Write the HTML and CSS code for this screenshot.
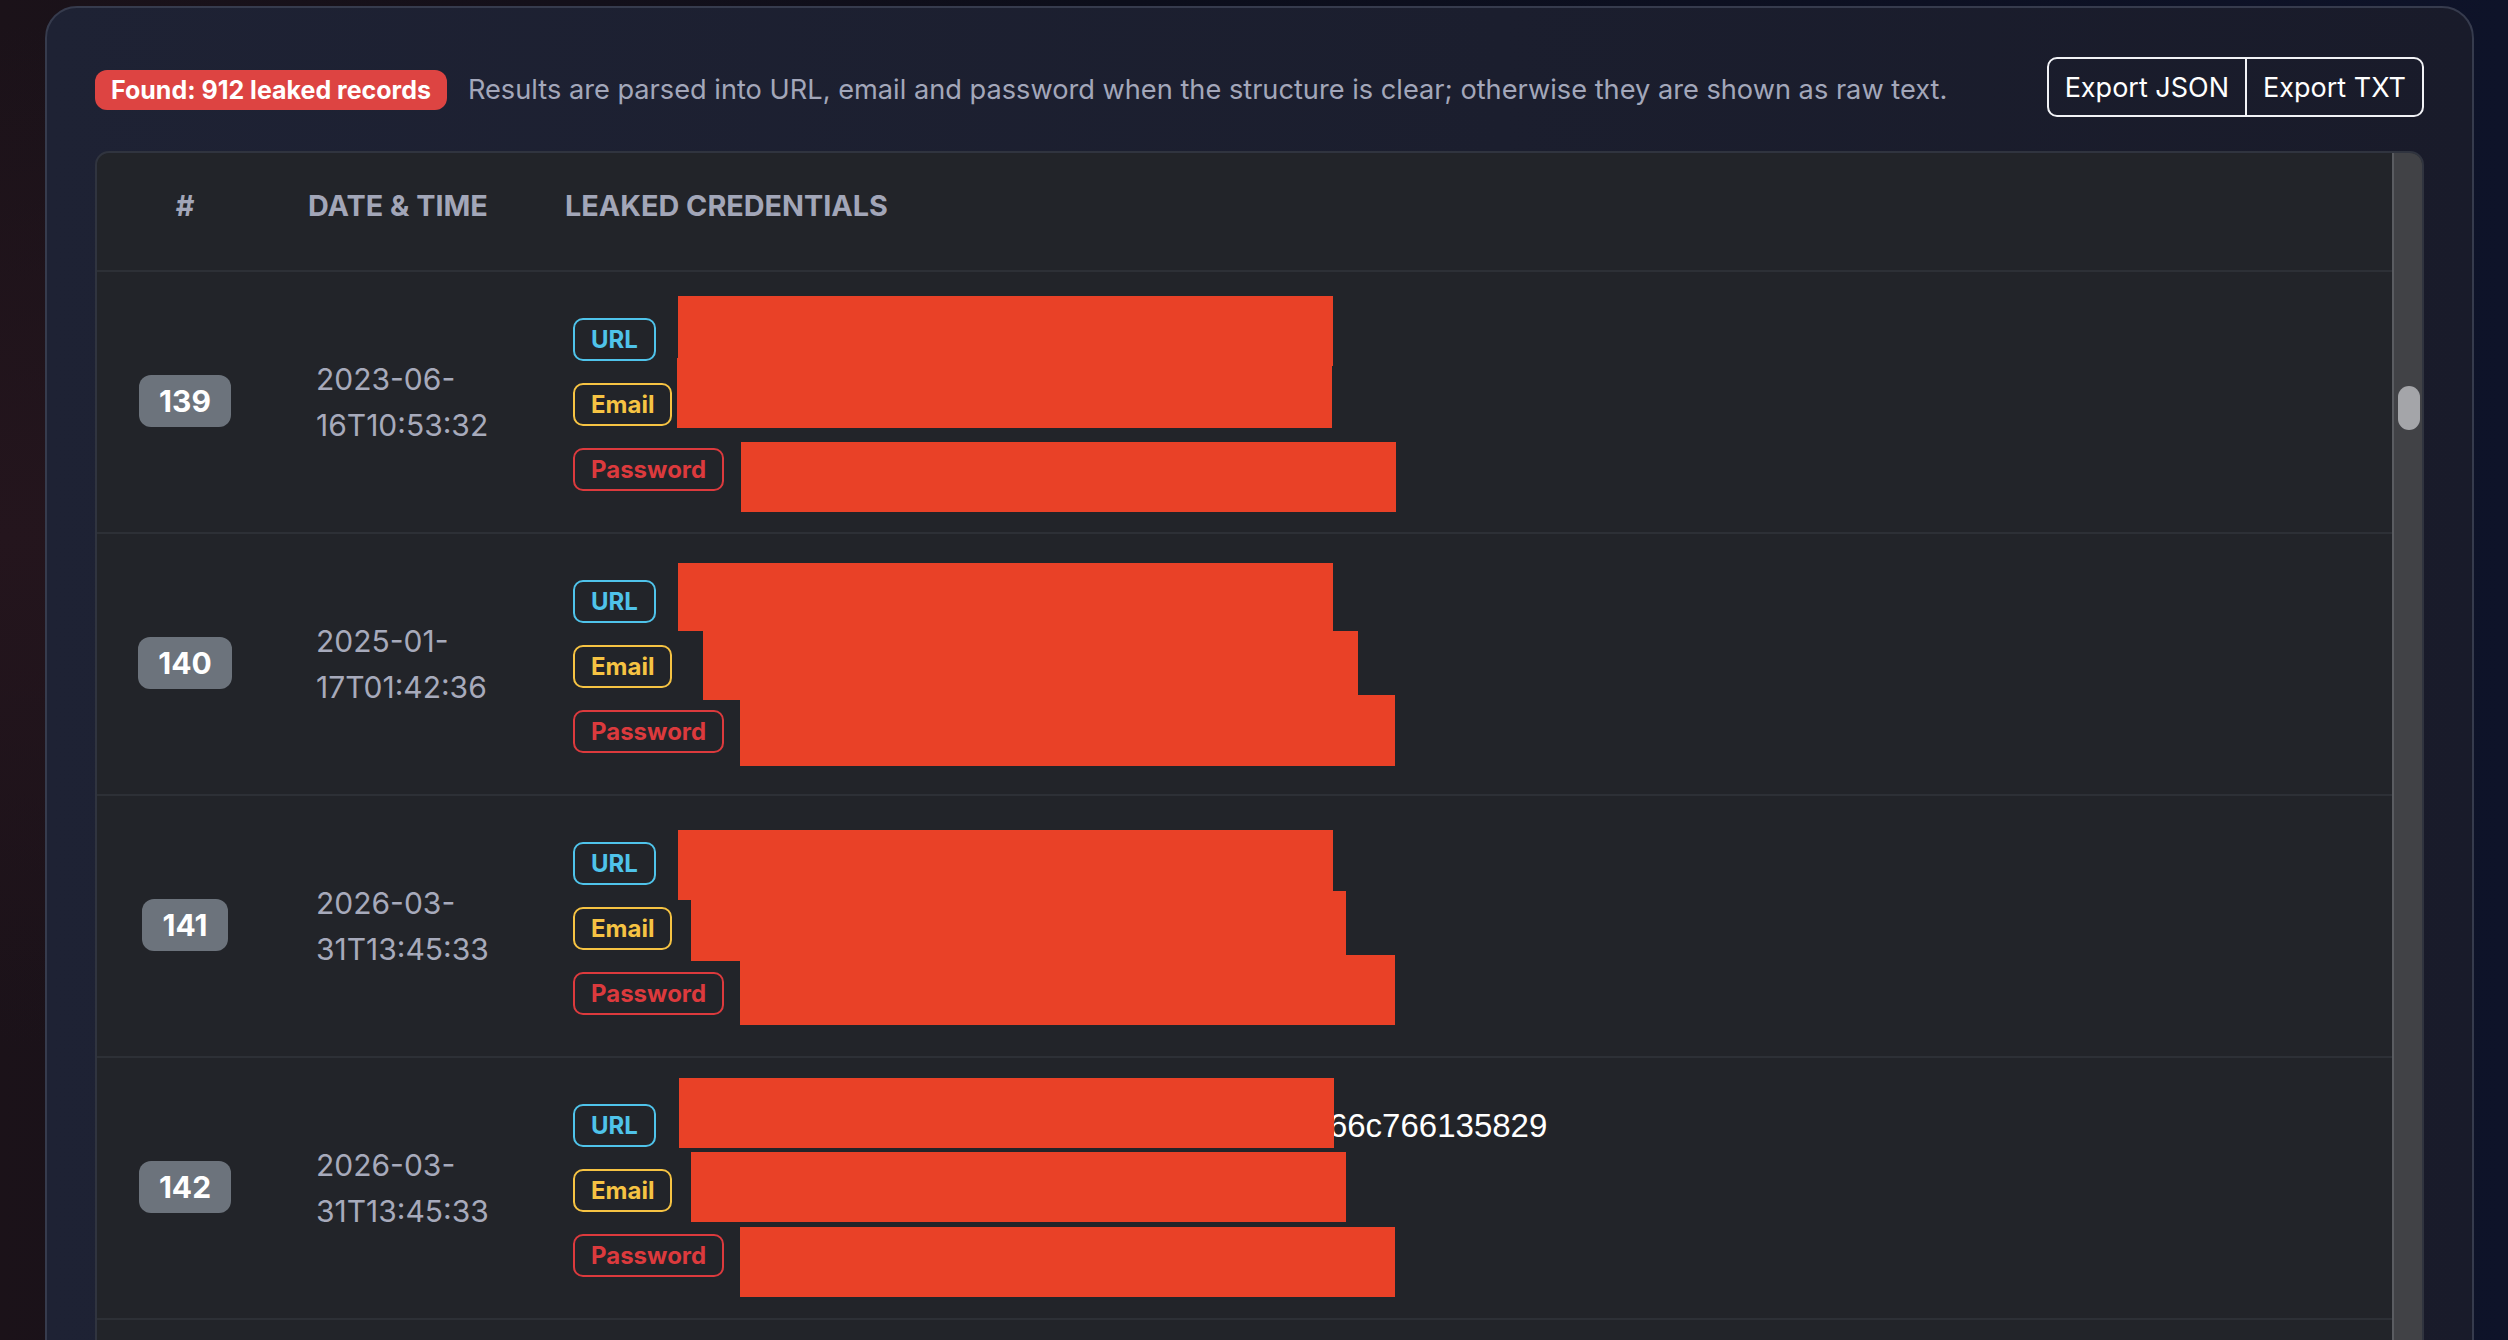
FILE: index.html
```html
<!DOCTYPE html>
<html lang="en">

<head>
    <meta charset="UTF-8">
    <meta name="viewport" content="width=device-width, initial-scale=1.0">
    <title>Leak lookup</title>
    <link rel="stylesheet" href="styles.css">
</head>

<body>
    <main class="card">
        <header class="card-head">
            <div class="summary">
                <span class="badge badge-found">Found: 912 leaked records</span>
                <span class="hint">Results are parsed into URL, email and password when the structure is clear; otherwise they are shown as raw text.</span>
            </div>
            <div class="btn-group">
                <button class="btn">Export JSON</button>
                <button class="btn">Export TXT</button>
            </div>
        </header>

        <section class="results">
            <div class="results-body">
                <table class="leaks">
                    <colgroup>
                        <col class="c-num">
                        <col class="c-date">
                        <col>
                    </colgroup>
                    <thead>
                        <tr>
                            <th class="col-num">#</th>
                            <th>Date &amp; Time</th>
                            <th>Leaked credentials</th>
                        </tr>
                    </thead>
                    <tbody>
                        <tr class="mask-1">
                            <td class="col-num"><span class="badge badge-num">139</span></td>
                            <td class="col-date">2023-06-16T10:53:32</td>
                            <td>
                                <div class="creds">
                                    <div class="cred"><span class="tag tag-url">URL</span></div>
                                    <div class="cred"><span class="tag tag-email">Email</span></div>
                                    <div class="cred"><span class="tag tag-pass">Password</span></div>
                                    <mark class="redacted r-url"></mark>
                                    <mark class="redacted r-email"></mark>
                                    <mark class="redacted r-pass"></mark>
                                </div>
                            </td>
                        </tr>
                        <tr class="mask-2">
                            <td class="col-num"><span class="badge badge-num">140</span></td>
                            <td class="col-date">2025-01-17T01:42:36</td>
                            <td>
                                <div class="creds">
                                    <div class="cred"><span class="tag tag-url">URL</span></div>
                                    <div class="cred"><span class="tag tag-email">Email</span></div>
                                    <div class="cred"><span class="tag tag-pass">Password</span></div>
                                    <mark class="redacted r-url"></mark>
                                    <mark class="redacted r-email"></mark>
                                    <mark class="redacted r-pass"></mark>
                                </div>
                            </td>
                        </tr>
                        <tr class="mask-3">
                            <td class="col-num"><span class="badge badge-num">141</span></td>
                            <td class="col-date">2026-03-31T13:45:33</td>
                            <td>
                                <div class="creds">
                                    <div class="cred"><span class="tag tag-url">URL</span></div>
                                    <div class="cred"><span class="tag tag-email">Email</span></div>
                                    <div class="cred"><span class="tag tag-pass">Password</span></div>
                                    <mark class="redacted r-url"></mark>
                                    <mark class="redacted r-email"></mark>
                                    <mark class="redacted r-pass"></mark>
                                </div>
                            </td>
                        </tr>
                        <tr class="mask-4">
                            <td class="col-num"><span class="badge badge-num">142</span></td>
                            <td class="col-date">2026-03-31T13:45:33</td>
                            <td>
                                <div class="creds">
                                    <div class="cred"><span class="tag tag-url">URL</span><span class="value value-tail">66c766135829</span></div>
                                    <div class="cred"><span class="tag tag-email">Email</span></div>
                                    <div class="cred"><span class="tag tag-pass">Password</span></div>
                                    <mark class="redacted r-url"></mark>
                                    <mark class="redacted r-email"></mark>
                                    <mark class="redacted r-pass"></mark>
                                </div>
                            </td>
                        </tr>
                    </tbody>
                </table>
            </div>
            <div class="scrollbar"><div class="scrollbar-thumb"></div></div>
        </section>
    </main>
</body>

</html>
```

FILE: styles.css
```css
* {
    box-sizing: border-box;
}

html,
body {
    height: 100%;
}

body {
    margin: 0;
    overflow: hidden;
    padding: 6px 34px 0 45px;
    font-family: Inter, "Noto Sans", sans-serif;
    color: #eceef4;
    background:
        radial-gradient(ellipse at 0 40%, #24151d 0, rgba(36, 21, 29, 0) 45%),
        linear-gradient(90deg, #1b1219 0%, #0c0e1b 45%, #0e1329 100%);
}

/* outer panel */
.card {
    height: calc(100vh + 120px);
    border: 2px solid #363b4d;
    border-radius: 32px;
    padding: 49px 48px 0;
    background: linear-gradient(90deg, #1e2234 0%, #1b1e2e 60%, #191b2a 100%);
}

.card-head {
    display: flex;
    justify-content: space-between;
    align-items: center;
    margin-bottom: 34px;
}

.summary {
    display: flex;
    align-items: center;
    gap: 21px;
    padding-top: 5px;
}

.badge {
    display: inline-block;
    font-weight: 700;
    color: #fff;
    white-space: nowrap;
}

.badge-found {
    font-size: 25px;
    line-height: 24px;
    padding: 8px 16px;
    border-radius: 12px;
    background-color: #dd4442;
}

.hint {
    font-size: 27.2px;
    color: #a3a7ba;
    white-space: nowrap;
}

.btn-group {
    display: flex;
    border: 2px solid #f1f2f6;
    border-radius: 10px;
    overflow: hidden;
}

.btn {
    height: 56px;
    padding: 0 16px;
    border: none;
    background: transparent;
    color: #fff;
    font-family: inherit;
    font-size: 27px;
    cursor: pointer;
}

.btn + .btn {
    border-left: 2px solid #f1f2f6;
}

/* results table */
.results {
    display: flex;
    height: 1400px;
    border: 2px solid #30343f;
    border-radius: 14px;
    background-color: #222429;
    overflow: hidden;
}

.results-body {
    flex: 1;
}

.scrollbar {
    width: 30px;
    padding-top: 233px;
    background-color: #414246;
    border-left: 2px solid #5a5c61;
}

.scrollbar-thumb {
    width: 22px;
    height: 44px;
    margin-left: 4px;
    border-radius: 11px;
    background-color: #a4a5a9;
}

.leaks {
    width: 100%;
    border-collapse: collapse;
    table-layout: fixed;
}

.c-num {
    width: 176px;
}

.c-date {
    width: 257px;
}

.leaks th {
    height: 118px;
    padding: 0 35px 12px;
    text-align: left;
    font-size: 28.8px;
    font-weight: 700;
    text-transform: uppercase;
    color: #a2a6b8;
    border-bottom: 2px solid #2d3036;
}

.leaks td {
    padding: 46px 27px 41px 43px;
    vertical-align: middle;
    border-bottom: 2px solid #2d3036;
}

.leaks .col-num {
    padding-left: 0;
    padding-right: 0;
    text-align: center;
}

.leaks td.col-num {
    padding-top: 42px;
    padding-bottom: 45px;
}

.badge-num {
    font-size: 30px;
    line-height: 30px;
    padding: 11px 20px;
    border-radius: 12px;
    background-color: #6c737c;
}

.col-date {
    font-size: 30px;
    line-height: 46px;
    color: #a7aabb;
}

.leaks td.col-date {
    padding-top: 43px;
    padding-bottom: 44px;
}

/* credential lines */
.creds {
    position: relative;
}

.cred {
    display: flex;
    align-items: center;
    height: 43px;
}

.cred + .cred {
    margin-top: 22px;
}

.tag {
    display: inline-flex;
    align-items: center;
    height: 43px;
    padding: 0 16px;
    border: 2px solid currentColor;
    border-radius: 10px;
    font-size: 24px;
    font-weight: 700;
}

.tag-url {
    color: #4fc3ea;
}

.tag-email {
    color: #f6c343;
}

.tag-pass {
    color: #dc3a3d;
}

.value {
    font-family: "Liberation Sans", Arial, sans-serif;
    font-size: 33px;
    color: #fff;
    white-space: nowrap;
}

.value-tail {
    margin-left: 673px;
}

/* redaction boxes drawn over the values */
.redacted {
    position: absolute;
    width: 655px;
    height: 70px;
    background-color: #e94127;
}

.r-url {
    left: 105px;
}

.r-email {
    left: 118px;
}

.r-pass {
    left: 167px;
}

.mask-1 .r-url { top: -22px; }
.mask-1 .r-email { top: 40px; left: 104px; }
.mask-1 .r-pass { top: 124px; left: 168px; }

.mask-2 .r-url { top: -17px; height: 68px; }
.mask-2 .r-email { top: 51px; left: 130px; height: 69px; }
.mask-2 .r-pass { top: 115px; height: 71px; }

.mask-3 .r-url { top: -12px; }
.mask-3 .r-email { top: 49px; }
.mask-3 .r-pass { top: 113px; }

.mask-4 .r-url { top: -26px; left: 106px; }
.mask-4 .r-email { top: 48px; }
.mask-4 .r-pass { top: 123px; }
```
